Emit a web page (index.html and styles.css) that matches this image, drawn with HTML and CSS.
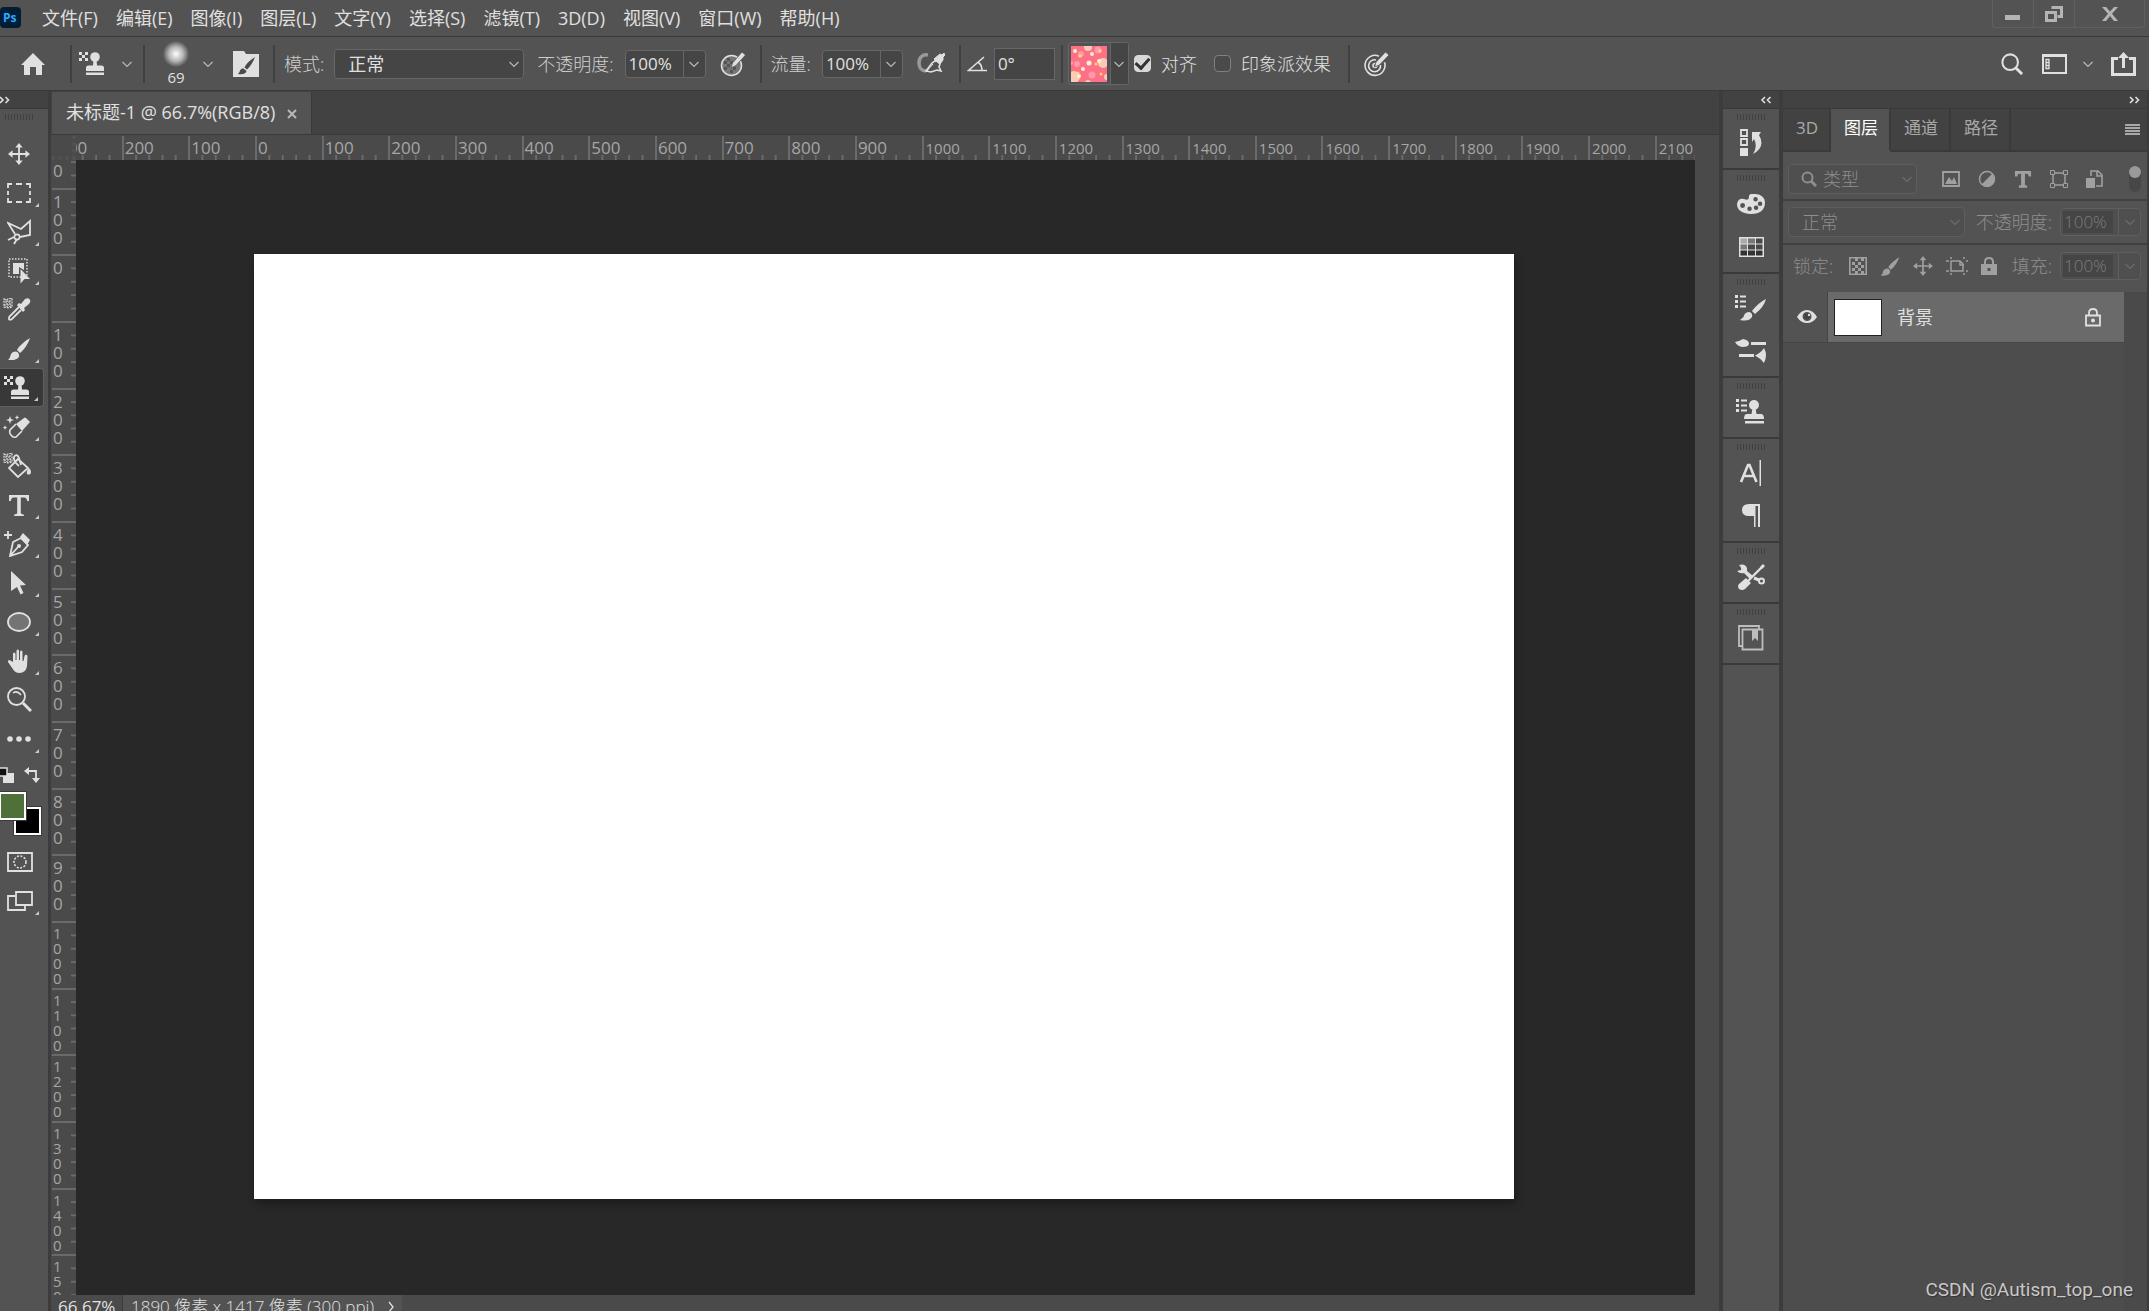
FILE: index.html
```html
<!DOCTYPE html>
<html lang="zh-CN">
<head>
  <meta charset="UTF-8" />
  <title>未标题-1 @ 66.7%(RGB/8)</title>
  <link rel="stylesheet" href="styles.css">
</head>
<body>

  <!-- Icons used more than once -->
  <svg class="sprite" aria-hidden="true">
    <symbol id="chevron" viewBox="0 0 12 8"><path d="M1.500 2l4.500 4.500L10.500 2" fill="none" stroke="currentColor" stroke-width="1.200"/></symbol>
    <symbol id="stamp" viewBox="0 0 28 24">
      <path d="M1 0h3v3H1zM7 0h3v3H7zM4 3h3v3H4zM1 6h3v3H1zM7 6h3v3H7z"/>
      <circle cx="17" cy="5" r="4.8"/><path d="M15.500 8h3l.600 6h-4.200z"/>
      <path d="M8 19v-3q0-2.500 2.500-2.500h13Q26 13.500 26 16v3zM8 20.500h18V23H8z"/>
    </symbol>
    <symbol id="brush" viewBox="0 0 24 24"><path d="M23 1C18 4 12 9 10 13l3 3C17 13 21 7 23 1zM9 14.500c-3 0-5 1.500-5.500 4C3 20.500 2 22 1 23c5 .500 10-.500 11-3.500.500-2-.500-4.500-3-5z"/></symbol>
    <symbol id="move" viewBox="0 0 24 24"><path d="M12 0l4 5h-3v6h6V8l5 4-5 4v-3h-6v6h3l-4 5-4-5h3v-6H5v3l-5-4 5-4v3h6V5H8z"/></symbol>
    <symbol id="search" viewBox="0 0 24 24"><circle cx="10" cy="10" r="8.500" fill="none" stroke="currentColor" stroke-width="2.200"/><path d="M16 16l7 7" stroke="currentColor" stroke-width="3.200"/></symbol>
    <symbol id="type" viewBox="0 0 24 24"><path d="M2 2h20v6h-1.800q-.400-3.600-3-3.600h-3.400V20q0 1.400 3 1.400V23H7.200v-1.600q3 0 3-1.400V4.400H6.800q-2.600 0-3 3.600H2z"/></symbol>
    <symbol id="list" viewBox="0 0 12 14"><path d="M0 0h3v3H0zM0 5h3v3H0zM0 10h3v3H0zM5 .500h6v2H5zM5 5.500h6v2H5zM5 10.500h6v2H5z"/></symbol>
  </svg>

  <!-- Menu bar -->
  <header class="menubar">
    <svg class="logo" viewBox="0 0 21 21"><rect width="21" height="21" rx="4" fill="#001e36"/><text x="3" y="15" class="logo-text">Ps</text></svg>
    <nav class="menus">
      <a href="#">文件(F)</a>
      <a href="#">编辑(E)</a>
      <a href="#">图像(I)</a>
      <a href="#">图层(L)</a>
      <a href="#">文字(Y)</a>
      <a href="#">选择(S)</a>
      <a href="#">滤镜(T)</a>
      <a href="#">3D(D)</a>
      <a href="#">视图(V)</a>
      <a href="#">窗口(W)</a>
      <a href="#">帮助(H)</a>
    </nav>
    <div class="window-buttons">
      <button aria-label="最小化"><svg width="16" height="16"><path d="M0 9h15v5H0z"/></svg></button>
      <button aria-label="还原"><svg width="18" height="16"><path d="M6.500 1.500h10v9h-4M1.500 6.500h9v8h-9z" fill="none" stroke="currentColor" stroke-width="3"/></svg></button>
      <button class="wide" aria-label="关闭"><svg width="16" height="14"><path d="M0 0h4l4 4.500L12 0h4l-6 6.700L16 14h-4L8 9l-4 5H0l6-7.300z"/></svg></button>
    </div>
  </header>

  <!-- Tool options -->
  <section class="options">
    <button class="home" aria-label="主页"><svg width="24" height="22" viewBox="0 0 24 22"><path d="M12 0l12 12h-3v10h-6v-8H9v8H3V12H0z"/></svg></button>
    <i class="sep"></i>
    <button class="preset" aria-label="图案图章工具"><svg width="28" height="24"><use href="#stamp"/></svg><svg class="chev" width="12" height="8"><use href="#chevron"/></svg></button>
    <i class="sep"></i>
    <button class="brush-picker" aria-label="画笔预设">
      <span class="brush-size"><i class="soft-brush"></i>69</span>
      <svg class="chev" width="12" height="8"><use href="#chevron"/></svg>
    </button>
    <button class="folder" aria-label="画笔设置"><svg width="26" height="26" viewBox="0 0 26 26"><path d="M0 0h11l2 3h13v23H0z"/><path d="M22 6C17 9 13 13 11.500 16.500l2.500 2C17.500 15.500 20 11 22 6zM10.500 17.500c-3 0-3.500 2-4 3.500L5 23c4 .600 8 0 8.500-3z" fill="#4a4a4a"/></svg></button>
    <i class="sep"></i>
    <label for="mode">模式:</label>
    <span class="select-box mode-box">
      <select id="mode"><option>正常</option></select>
      <svg class="chev" width="12" height="8"><use href="#chevron"/></svg>
    </span>
    <label for="opacity">不透明度:</label>
    <span class="combo">
      <input id="opacity" type="text" value="100%">
      <button aria-label="不透明度滑块"><svg class="chev" width="12" height="8"><use href="#chevron"/></svg></button>
    </span>
    <button class="pressure" aria-label="不透明度压力"><svg width="26" height="26" viewBox="0 0 26 26"><circle cx="11.500" cy="14.500" r="10" fill="#777" stroke="currentColor" stroke-width="1.500"/><path d="M4 10h3v3H4zM10 10h3v3h-3zM7 13h3v3H7zM13 16h3v3h-3zM4 16h3v3H4zM10 19h3v3h-3zM7 7h3v3H7z" fill="#555"/><path d="M11 17l1.500-5L22 1l3.500 3L16 14.500z" stroke="#535353" stroke-width=".8"/></svg></button>
    <i class="sep"></i>
    <label for="flow">流量:</label>
    <span class="combo">
      <input id="flow" type="text" value="100%">
      <button aria-label="流量滑块"><svg class="chev" width="12" height="8"><use href="#chevron"/></svg></button>
    </span>
    <button class="pressure" aria-label="喷枪"><svg width="28" height="22" viewBox="0 0 28 22"><path d="M11 2C5 1 2 5 2 10s3 8 7 8" fill="none" stroke="#999" stroke-width="3.500"/><path d="M9 18l6-8 4-3 4 4-1 3 2 4-4-1-6 2z" fill="none" stroke="currentColor" stroke-width="1.600"/><path d="M17 6l6-5 2 1 2-2 1 2-2 2 0 3-3 4zM9 19l7-8" stroke="currentColor"/></svg></button>
    <i class="sep"></i>
    <label class="angle-label" for="angle" aria-label="角度"><svg width="20" height="16" viewBox="0 0 20 16"><path d="M17 1L1.500 14.500H20M11 6q4 3 4 8" fill="none" stroke="currentColor" stroke-width="1.600"/></svg></label>
    <input id="angle" class="angle" type="text" value="0°">
    <i class="sep"></i>
    <button class="pattern" aria-label="图案拾色器">
      <svg width="36" height="36" viewBox="0 0 36 36">
        <rect width="36" height="36" fill="#ff6f87"/>
        <g fill="#f9cdb5"><circle cx="17" cy="1" r="4"/><circle cx="32" cy="17" r="5"/><circle cx="3" cy="31" r="6"/><circle cx="17" cy="37" r="3"/><circle cx="36" cy="31" r="3"/></g>
        <g fill="#ff9aaa"><circle cx="10" cy="8" r="3"/><circle cx="27" cy="4" r="3.500"/><circle cx="6" cy="18" r="3"/><circle cx="21" cy="29" r="3.500"/><circle cx="0" cy="17" r="2"/></g>
        <g fill="#fff3cf"><circle cx="4" cy="5" r="2"/><circle cx="21" cy="8" r="2"/><circle cx="18" cy="17" r="2.500"/><circle cx="12" cy="23" r="2"/><circle cx="28" cy="15" r="2"/><circle cx="8" cy="30" r="2"/></g>
        <g fill="#ffdc6b"><circle cx="9" cy="10" r="1.800"/><circle cx="29" cy="5" r="1.500"/><circle cx="25" cy="18" r="1.500"/><circle cx="7" cy="27" r="1.500"/><circle cx="30" cy="28" r="1.500"/></g>
      </svg>
      <span class="pattern-arrow"><svg class="chev" width="12" height="8"><use href="#chevron"/></svg></span>
    </button>
    <input id="aligned" type="checkbox" checked>
    <label for="aligned" class="check-label">对齐</label>
    <input id="impression" type="checkbox">
    <label for="impression" class="check-label">印象派效果</label>
    <i class="sep"></i>
    <button class="pressure" aria-label="大小压力"><svg width="26" height="26" viewBox="0 0 26 26"><g fill="none" stroke="currentColor" stroke-width="1.600"><path d="M15 5.200a10 10 0 1 0 5.500 6"/><path d="M12 9a6 6 0 1 0 4.500 5"/><circle cx="11" cy="14.500" r="2"/></g><path d="M10.500 16l1.500-5L21.500 1l3.500 3-9.500 10z" stroke="#535353" stroke-width=".8"/></svg></button>
    <div class="options-right">
      <button class="find" aria-label="搜索"><svg width="22" height="22"><use href="#search"/></svg></button>
      <button class="workspace" aria-label="工作区">
        <svg width="25" height="20" viewBox="0 0 25 20"><path d="M1 2h23v17H1z" fill="none" stroke="currentColor" stroke-width="2"/><path d="M0 0h25v3H0z"/><path d="M4 5.500h3v9H4zM4 8.500h3M4 11.500h3" fill="none" stroke="currentColor" stroke-width="1.300"/></svg>
        <svg class="chev" width="12" height="8"><use href="#chevron"/></svg>
      </button>
      <button aria-label="共享"><svg width="25" height="24" viewBox="0 0 25 24"><path d="M7 6.500H1.500v16h22v-16H18" fill="none" stroke="currentColor" stroke-width="3"/><path d="M11 16V6H7l5.500-6L18 6h-4v10z"/></svg></button>
    </div>
  </section>

  <main class="workarea">

    <!-- Toolbox -->
    <aside class="toolbox">
      <div class="dock-head"><svg width="10" height="8" viewBox="0 0 10 8"><path d="M0 1l3 3-3 3M5.500 1l3 3-3 3" fill="none" stroke="currentColor" stroke-width="1.600"/></svg></div>
      <div class="grip-row"><i class="grip"></i></div>
      <button class="tool" aria-label="移动"><svg width="24" height="22"><use href="#move"/></svg></button>
      <button class="tool more" aria-label="矩形选框"><svg width="24" height="20"><path d="M1 5V1h4M9 1h6M19 1h4v4M23 8v4M23 15v4h-4M15 19H9M5 19H1v-4M1 12V8" fill="none" stroke="currentColor" stroke-width="1.800"/></svg></button>
      <button class="tool more" aria-label="多边形套索"><svg width="24" height="26" viewBox="0 0 24 26"><path d="M8 15L1 4l13 6 9-8v14L13 18M7 25l3-5M1 21l6-3" fill="none" stroke="currentColor" stroke-width="1.800"/><circle cx="10" cy="18" r="2.600" fill="none" stroke="currentColor" stroke-width="1.600"/></svg></button>
      <button class="tool more" aria-label="对象选择"><svg width="24" height="26" viewBox="0 0 24 26"><rect x="2" y="1" width="18" height="18" fill="none" stroke="currentColor" stroke-width="1.500" stroke-dasharray="1.500 1.500"/><path d="M6 5h11v7l-5-3v7H6z"/><path d="M13.500 11l9.500 10h-5.500l-4 4.500z"/></svg></button>
      <button class="tool" aria-label="吸管"><svg class="left" width="28" height="24" viewBox="0 0 28 24"><path d="M1 1l2 1 2-1 4-1v9l-3 1-5-1zM2 4h6M1 7h7M4 2v7M7 2v7" fill="none" stroke="currentColor" stroke-width="1.200" stroke-dasharray="2 1"/><path d="M16 9L6.500 18.500q-2 4 2 3L18 12" fill="none" stroke="currentColor" stroke-width="1.800"/><path d="M14 7l2-2 2 1 4-5q4-2 5 1 1 2-1 4l-5 4 1 2-2 2z"/></svg></button>
      <button class="tool more" aria-label="画笔"><svg width="24" height="24"><use href="#brush"/></svg></button>
      <button class="tool more active" aria-label="图案图章"><svg class="left" width="28" height="24"><use href="#stamp"/></svg></button>
      <button class="tool more" aria-label="橡皮擦"><svg class="left" width="28" height="24" viewBox="0 0 28 24"><path d="M7 1l1 3 3 1-3 1-1 3-1-3-3-1 3-1zM14 0l.700 1.700 1.700.700-1.700.700L14 5l-.700-1.900-1.700-.700 1.700-.700zM2 10l.700 1.900 1.700.700-1.700.700L2 15l-.700-1.700-1.700-.700 1.700-.700zM13 9l8-6q1-1 2 0l4 4-8 9z"/><path d="M13 9l-6 6q-1 3 1 5 2 3 5 2l6-6" fill="none" stroke="currentColor" stroke-width="1.600"/></svg></button>
      <button class="tool" aria-label="油漆桶"><svg class="left" width="30" height="26" viewBox="0 0 30 26"><path d="M1 1l2 1 2-1 4-1v9l-3 1-5-1zM2 4h6M1 7h7M4 2v7M7 2v7" fill="none" stroke="currentColor" stroke-width="1.200" stroke-dasharray="2 1"/><path d="M15 6L6 15l9 9 10-9zM16 13Q10 8 11 4q3-4 5 1l2 7" fill="none" stroke="currentColor" stroke-width="1.800"/><path d="M26 15q3 3 1.500 6-2 1-3.500 0-1-3 2-6z"/></svg></button>
      <button class="tool more" aria-label="文字"><svg width="24" height="24"><use href="#type"/></svg></button>
      <button class="tool more" aria-label="钢笔"><svg class="left" width="28" height="26" viewBox="0 0 28 26"><path d="M5 0v8M1 4h8" stroke="currentColor" stroke-width="1.800"/><path d="M7 25l3-14 8-4 7 7-6 7zM7 25l8-9" fill="none" stroke="currentColor" stroke-width="1.800"/><circle cx="16" cy="15" r="2"/><path d="M17 6l3-4 7 7-3 5z"/></svg></button>
      <button class="tool more" aria-label="路径选择"><svg width="24" height="24" viewBox="-3 0 24 24"><path d="M1 0l15 14-6 .500 3.500 7.500-3 1.500L7 16l-6 4z"/></svg></button>
      <button class="tool more" aria-label="椭圆"><svg width="24" height="20"><ellipse cx="12" cy="10" rx="11" ry="9" fill="#747474" stroke="currentColor" stroke-width="1.800"/></svg></button>
      <button class="tool more" aria-label="抓手"><svg width="24" height="24" viewBox="-1 0 24 24"><path d="M5 13V5q0-1.500 1.200-1.500T7.500 5v6h1V2q0-1.500 1.300-1.500T11 2v9h1V3q0-1.500 1.300-1.500T14.500 3v9h1l1-5q.500-1.500 1.700-1.200T19.500 7L19 17q-1 7-7.500 7-4 0-6-3L0 13q-.500-2 1.500-2z"/></svg></button>
      <button class="tool" aria-label="缩放"><svg width="25" height="25" viewBox="0 0 25 25"><circle cx="9.500" cy="9.500" r="8.500" fill="none" stroke="currentColor" stroke-width="1.800"/><path d="M6 6q4-3 8 2" fill="none" stroke="currentColor" stroke-width="1.500"/><path d="M16 16l8 8" stroke="currentColor" stroke-width="3"/></svg></button>
      <button class="tool more" aria-label="更多工具"><svg width="24" height="8"><circle cx="3" cy="4" r="2.800"/><circle cx="12" cy="4" r="2.800"/><circle cx="21" cy="4" r="2.800"/></svg></button>
      <div class="color-reset">
        <svg width="14" height="16"><path d="M3 6h11v10H3z"/><path d="M-1 1h8v8h-8z" fill="#111" stroke="currentColor" stroke-width="1.500"/></svg>
        <svg width="16" height="16" viewBox="0 0 16 16"><path d="M3 4h9v8" fill="none" stroke="currentColor" stroke-width="1.800"/><path d="M0 4l5-4v8zM8 11h8l-4 5z"/></svg>
      </div>
      <div class="colors">
        <button class="swatch background" aria-label="背景色"></button>
        <button class="swatch foreground" aria-label="前景色"></button>
      </div>
      <button class="tool" aria-label="快速蒙版"><svg width="26" height="20"><path d="M1 1h24v18H1z" fill="none" stroke="currentColor" stroke-width="1.800"/><circle cx="13" cy="10" r="6" fill="none" stroke="currentColor" stroke-width="1.600" stroke-dasharray="2 1.500"/></svg></button>
      <button class="tool more" aria-label="屏幕模式"><svg width="26" height="20"><path d="M8 5H1v14h17v-4M9 1h16v13H9z" fill="none" stroke="currentColor" stroke-width="1.800"/></svg></button>
    </aside>

    <!-- Document window -->
    <section class="document">
      <div class="doc-tabs">
        <div class="doc-tab">未标题-1 @ 66.7%(RGB/8)<button aria-label="关闭文档"><svg width="10" height="10"><path d="M1 1l8 8M9 1L1 9" stroke="currentColor" stroke-width="2"/></svg></button></div>
      </div>
      <div class="doc-view">
        <div class="ruler-corner"></div>
        <div class="ruler ruler-x" id="rulerX"></div>
        <div class="scroll-y"></div>
        <div class="ruler ruler-y" id="rulerY"></div>
        <div class="stage"><div class="paper"></div></div>
      </div>
      <footer class="status">
        <span class="zoom">66.67%</span>
        <span class="doc-info">1890 像素 x 1417 像素 (300 ppi)<svg width="6" height="12"><path d="M1 1l4 5-4 5" fill="none" stroke="currentColor" stroke-width="1.300"/></svg></span>
      </footer>
    </section>

    <!-- Collapsed panels -->
    <aside class="icon-dock">
      <div class="dock-head"><svg width="12" height="8" viewBox="0 0 12 8"><path d="M5 1L2 4l3 3M10.500 1l-3 3 3 3" fill="none" stroke="currentColor" stroke-width="1.600"/></svg></div>
      <div class="dock-group"><i class="grip"></i>
        <button aria-label="历史记录"><svg width="24" height="28" viewBox="0 0 24 28"><path d="M2 1h6v6H2zM2 10h6v6H2z" fill="none" stroke="currentColor" stroke-width="1.800"/><path d="M1 19h8v8H1zM13 3l9 0-2 3q7 12-6 19 5-8 1-15l-2 3z"/></svg></button>
      </div>
      <div class="dock-group"><i class="grip"></i>
        <button aria-label="颜色"><svg width="28" height="20" viewBox="0 0 28 20"><path fill-rule="evenodd" d="M12 4q-1-3 2-4 13-1 14 8 0 12-14 12Q0 19 0 10q1-6 7-5 4 2 5-1zM5.500 9a2.500 2.500 0 1 0 .1 5 2.500 2.500 0 0 0-.1-5zm7 3.500a2.200 2.200 0 1 0 .1 4.500 2.200 2.200 0 0 0-.1-4.500zm6.500-1a2.200 2.200 0 1 0 .1 4.500 2.200 2.200 0 0 0-.1-4.500zm4-4a2.200 2.200 0 1 0 .1 4.500 2.200 2.200 0 0 0-.1-4.500zM18.500 3a2.200 2.200 0 1 0 .1 4.500 2.200 2.200 0 0 0-.1-4.500z"/></svg></button>
        <button aria-label="色板"><svg width="25" height="20" viewBox="0 0 25 20"><path d="M0 0h25v20H0z"/><path d="M1.500 1.500h6.500v5H1.500z" fill="#aaa"/><path d="M9 1.500h7v5H9zM1.500 7.500H8v5H1.500z" fill="#777"/><path d="M17 1.500h6.500v5H17zM9 7.500h7v5H9zM17 7.500h6.500v5H17z" fill="#484848"/><path d="M1.500 13.500H8v5H1.500zM9 13.500h7v5H9zM17 13.500h6.500v5H17z" fill="#333"/></svg></button>
      </div>
      <div class="dock-group"><i class="grip"></i>
        <button aria-label="画笔设置"><svg width="32" height="26" viewBox="0 0 32 26"><use href="#list" width="12" height="14"/><path d="M31 4q-8 4-14 12l3 3Q29 12 31 4zM14.500 17q-5 0-6 5L5 25q9 2 12-3 1-4-2.500-5z"/></svg></button>
        <button aria-label="画笔"><svg width="32" height="24" viewBox="0 0 32 24"><path d="M0 3q5-1 8-3 6 1 6 4.500T7 8Q2 7 0 3zM16 3h15v3H16zM4 15h15v3H4zM20 16.500Q26 14 29 9q4 7 0 15-4-5-9-7.500z"/></svg></button>
      </div>
      <div class="dock-group"><i class="grip"></i>
        <button aria-label="仿制源"><svg width="30" height="26" viewBox="0 0 30 26"><use href="#list" width="12" height="14"/><circle cx="18" cy="6" r="5"/><path d="M16.500 9h3l1 6h-5zM8 20q0-5 3-5h14q3 0 3 5zM9 22h19v2.500H9z"/></svg></button>
      </div>
      <div class="dock-group"><i class="grip"></i>
        <button aria-label="字符"><svg width="24" height="26" viewBox="0 0 24 26"><path d="M2 22L9 5h1.500l7 17M5 16h10" fill="none" stroke="currentColor" stroke-width="2.600"/><path d="M20.500 0h1.500v26h-1.500z"/></svg></button>
        <button aria-label="段落"><svg width="18" height="23" viewBox="0 0 18 23"><path d="M18 0v23h-2V2h-2.500v21H12V12H7Q0 12 0 6t7-6z"/></svg></button>
      </div>
      <div class="dock-group"><i class="grip"></i>
        <button aria-label="工具预设"><svg width="28" height="26" viewBox="0 0 28 26"><path d="M26 2L11 17" stroke="currentColor" stroke-width="2.400"/><path d="M23 3l3-3 2 2-3 3zM9 14l5 5-6 6q-3 2-6 0-2-3 0-5z"/><path d="M2 1q6-2 8 3v3l6 5-3 3-6-6q-4 1-7-2l4-1q1-2-2-5z"/><path d="M17 14l5 2" stroke="currentColor" stroke-width="3"/><circle cx="24.500" cy="17" r="2.500" fill="none" stroke="currentColor" stroke-width="2"/></svg></button>
      </div>
      <div class="dock-group"><i class="grip"></i>
        <button class="dim" aria-label="库"><svg width="26" height="26" viewBox="0 0 26 26"><path d="M4 21H1V1h20v3M4.500 4.500h20v20h-20z" fill="none" stroke="currentColor" stroke-width="1.800"/><path d="M14 5h6v11l-3-3-3 3z"/></svg></button>
      </div>
      <div class="dock-rest"></div>
    </aside>

    <!-- Layers panel -->
    <aside class="panels">
      <div class="dock-head right"><svg width="12" height="8" viewBox="0 0 12 8"><path d="M1 1l3 3-3 3M6.500 1l3 3-3 3" fill="none" stroke="currentColor" stroke-width="1.600"/></svg></div>
      <div class="panel-tabs">
        <button>3D</button>
        <button class="current">图层</button>
        <button>通道</button>
        <button>路径</button>
        <button class="panel-menu" aria-label="面板菜单"><svg width="15" height="12"><path d="M0 0h15v2H0zM0 3h15v2H0zM0 6h15v2H0zM0 9h15v2H0z"/></svg></button>
      </div>
      <div class="panel-row filter-row">
        <span class="select-box filter-box">
          <svg width="16" height="16" viewBox="0 0 16 16"><circle cx="6.500" cy="6.500" r="5" fill="none" stroke="currentColor" stroke-width="2"/><path d="M10 10l5 5" stroke="currentColor" stroke-width="3"/></svg>
          <select aria-label="图层过滤" disabled><option>类型</option></select>
          <svg class="chev" width="12" height="8"><use href="#chevron"/></svg>
        </span>
        <div class="filter-icons">
          <button disabled aria-label="像素图层"><svg width="18" height="16"><path d="M1 1h16v14H1z" fill="none" stroke="currentColor" stroke-width="1.800"/><path d="M3 13l4-7 3 4 2-4 3 7z"/></svg></button>
          <button disabled aria-label="调整图层"><svg width="18" height="18"><circle cx="9" cy="9" r="7.500" fill="none" stroke="currentColor" stroke-width="1.500"/><path d="M14.500 3.500L3.500 14.500A7.600 7.600 0 0 0 14.500 3.500z"/></svg></button>
          <button disabled aria-label="文字图层"><svg width="18" height="18" viewBox="0 0 24 24"><use href="#type" stroke="currentColor" stroke-width="1.500"/></svg></button>
          <button disabled aria-label="形状图层"><svg width="18" height="18"><path d="M3 3h12v12H3z" fill="none" stroke="currentColor" stroke-width="1.500"/><path d="M.500.500h4v4h-4zM13.500.500h4v4h-4zM.500 13.500h4v4h-4zM13.500 13.500h4v4h-4z" fill="#535353" stroke="currentColor"/></svg></button>
          <button disabled aria-label="智能对象"><svg width="18" height="18"><path d="M5 6V1h7l4 4v11h-6M11 1v5h5" fill="none" stroke="currentColor" stroke-width="1.600"/><path d="M0 8h9v10H0z"/></svg></button>
        </div>
        <button class="toggle" disabled aria-label="图层过滤开关"><i></i></button>
      </div>
      <div class="panel-row blend-row">
        <span class="select-box blend-box">
          <select aria-label="混合模式" disabled><option>正常</option></select>
          <svg class="chev" width="12" height="8"><use href="#chevron"/></svg>
        </span>
        <label for="layerOpacity">不透明度:</label>
        <span class="combo">
          <input id="layerOpacity" type="text" value="100%" disabled>
          <button disabled aria-label="图层不透明度"><svg class="chev" width="12" height="8"><use href="#chevron"/></svg></button>
        </span>
      </div>
      <div class="panel-row lock-row">
        <span class="lock-label">锁定:</span>
        <div class="lock-icons">
          <button disabled aria-label="锁定透明像素"><svg width="18" height="18"><path d="M.800.800h16.400v16.400H.800z" fill="none" stroke="currentColor" stroke-width="1.600"/><path d="M6 1h3v3H6zM12 1h3v3h-3zM3 5h3v3H3zM9 5h3v3H9zM6 8h3v3H6zM12 8h3v3h-3zM3 11h3v3H3zM9 11h3v3H9zM6 14h3v3H6zM12 14h3v3h-3z"/></svg></button>
          <button disabled aria-label="锁定图像像素"><svg width="20" height="21" viewBox="0 0 24 24"><use href="#brush"/></svg></button>
          <button disabled aria-label="锁定位置"><svg width="20" height="20"><use href="#move"/></svg></button>
          <button disabled aria-label="防止嵌套"><svg width="22" height="18"><path d="M0 4h3M5 4h9l3 3v7H5zM14 4v4h4M5 0v2M18 0v2M20 4h2M0 14h3M5 16v2M18 16v2M20 14h2" fill="none" stroke="currentColor" stroke-width="1.500"/></svg></button>
          <button disabled aria-label="锁定全部"><svg width="16" height="18"><path d="M4 8V5q0-4 4-4t4 4v3" fill="none" stroke="currentColor" stroke-width="2"/><path fill-rule="evenodd" d="M0 7h16v11H0zM6.500 11v3h3v-3z"/></svg></button>
        </div>
        <label for="fill">填充:</label>
        <span class="combo">
          <input id="fill" type="text" value="100%" disabled>
          <button disabled aria-label="填充"><svg class="chev" width="12" height="8"><use href="#chevron"/></svg></button>
        </span>
      </div>
      <div class="layers">
        <div class="layer-list">
          <div class="layer">
            <button class="eye" aria-label="可见性"><svg width="20" height="14" viewBox="0 0 20 14"><path fill-rule="evenodd" d="M0 7q4-7 10-7t10 7q-4 6-10 6T0 7zm10-5a4.500 4.500 0 1 0 .1 9 4.500 4.500 0 0 0-.1-9z"/><circle cx="10" cy="6.500" r="3" fill="#444"/><circle cx="12" cy="5" r="1.200"/></svg></button>
            <div class="layer-body">
              <i class="thumb"></i>
              <span class="layer-name">背景</span>
              <svg width="16" height="19" viewBox="0 0 16 19"><path d="M4 7V5q0-4 4-4t4 4v2M1 7.500h14v10H1z" fill="none" stroke="currentColor" stroke-width="1.800"/><circle cx="8" cy="12.500" r="2"/></svg>
            </div>
          </div>
        </div>
        <div class="layer-scroll"></div>
      </div>
    </aside>
  </main>

  <div class="watermark">CSDN @Autism_top_one</div>

  <script>
    // one cell per 100 document pixels, starting left of / above the origin
    function buildRuler(id, from, to) {
      const ruler = document.getElementById(id);
      for (let n = from; n <= to; n += 100) {
        const cell = document.createElement("span");
        const value = Math.abs(n);
        cell.textContent = value;
        cell.className = value >= 1000 ? "cell small" : "cell";
        ruler.appendChild(cell);
      }
    }

    buildRuler("rulerX", -300, 2100);
    buildRuler("rulerY", -200, 1500);
  </script>

</body>
</html>
```
FILE: styles.css
```css
* {
  box-sizing: border-box;
}
body {
  margin: 0;
  height: 100vh;
  display: flex;
  flex-direction: column;
  overflow: hidden;
  background-color: #535353;
  color: #e0e0e0;
  font-family: "Open Sans", "Noto Sans CJK SC", sans-serif;
  font-size: 18px;
  line-height: 24px;
}
button, input, select {
  font: inherit;
  color: inherit;
  margin: 0;
  padding: 0;
  border: 0;
  background: none;
}
button {
  display: flex;
  align-items: center;
  justify-content: center;
}
svg {
  display: block;
  flex: none;
  fill: currentColor;
}
a {
  color: inherit;
  text-decoration: none;
}
.sprite {
  display: none;
}
.chev {
  color: #b8b8b8;
}

/* menu bar */
.menubar {
  display: flex;
  align-items: center;
  height: 37px;
  padding-bottom: 1px;
  border-bottom: 1px solid #3a3a3a;
}
.logo {
  width: 21px;
  height: 21px;
}
.logo-text {
  font-size: 12px;
  font-weight: bold;
  fill: #31a8ff;
}
.menus {
  display: flex;
  gap: 18px;
  margin-left: 21px;
}
.window-buttons {
  display: flex;
  align-self: flex-start;
  margin: 0 4px 0 auto;
  height: 28px;
  border: 1px solid #606060;
  border-top: 0;
  border-radius: 0 0 4px 4px;
  color: #b4b4b4;
}
.window-buttons button {
  width: 41px;
  border-right: 1px solid #606060;
}
.window-buttons .wide {
  width: 69px;
  border-right: 0;
}

/* tool options */
.options {
  display: flex;
  align-items: center;
  height: 54px;
  padding: 0 13px 0 21px;
  border-bottom: 1px solid #3a3a3a;
  flex: none;
}
.options label {
  color: #cfcfcf;
  font-weight: 300;
  white-space: nowrap;
}
.sep {
  flex: none;
  width: 2px;
  height: 38px;
  background-color: #404040;
}
.home {
  margin-right: 25px;
}
.preset {
  gap: 15px;
  margin: 0 10px 0 6px;
}
.brush-picker {
  gap: 13px;
  margin: 0 19px 0 18px;
}
.brush-size {
  display: flex;
  flex-direction: column;
  align-items: center;
  font-size: 15px;
  line-height: 20px;
}
.soft-brush {
  width: 26px;
  height: 26px;
  border-radius: 50%;
  background: radial-gradient(circle, #fff 0%, #b4b4b4 40%, #535353 72%);
}
.folder {
  margin-right: 14px;
}
.sep + label {
  margin-left: 9px;
}
.select-box {
  display: flex;
  align-items: center;
  height: 30px;
  padding-right: 3px;
  border: 1px solid #666;
  border-radius: 4px;
  background-color: #454545;
}
.select-box select {
  flex: 1;
  min-width: 0;
  appearance: none;
  opacity: 1;
}
.mode-box {
  width: 190px;
  margin: 0 13px 0 10px;
  padding-left: 13px;
}
.combo {
  display: flex;
  width: 81px;
  height: 28px;
  margin-left: 11px;
  border: 1px solid #666;
  border-radius: 4px;
  background-color: #454545;
}
.combo input {
  flex: 1;
  min-width: 0;
  padding-left: 3px;
  font-size: 17px;
}
.combo button {
  width: 22px;
  border-left: 1px solid #666;
}
.pressure {
  margin: 0 14px;
}
.options .angle-label {
  margin: 0 7px 0 6px;
  color: #e0e0e0;
}
.angle {
  width: 61px;
  height: 32px;
  margin-right: 6px;
  padding-left: 3px;
  border: 1px solid #666;
  background-color: #454545;
  font-size: 17px;
}
.pattern {
  margin: 0 5px;
  height: 43px;
  padding-left: 2px;
  border: 1px solid #666;
  border-radius: 3px;
}
.pattern-arrow {
  display: flex;
  align-items: center;
  justify-content: center;
  width: 18px;
  height: 41px;
  margin-left: 3px;
  border-left: 1px solid #666;
  background-color: #454545;
}
input[type="checkbox"] {
  appearance: none;
  flex: none;
  display: flex;
  align-items: center;
  justify-content: center;
  width: 17px;
  height: 17px;
  border: 1px solid #808080;
  border-radius: 4px;
  background-color: #4a4a4a;
}
input[type="checkbox"]:checked {
  border-color: #d8d8d8;
  background-color: #d8d8d8;
}
input[type="checkbox"]:checked::before {
  content: "";
  width: 6px;
  height: 11px;
  margin-bottom: 3px;
  border: solid #333;
  border-width: 0 3px 3px 0;
  transform: rotate(42deg);
}
.options .check-label {
  margin: 0 17px 0 10px;
  color: #e0e0e0;
}
.options-right {
  display: flex;
  align-items: center;
  gap: 17px;
  margin-left: auto;
}
.find {
  margin-right: 2px;
}
.workspace {
  gap: 15px;
}

/* main area */
.workarea {
  display: flex;
  flex: 1;
  min-height: 0;
}
.dock-head {
  display: flex;
  align-items: center;
  height: 18px;
  flex: none;
  border-bottom: 1px solid #3a3a3a;
  background-color: #424242;
}
.dock-head.right {
  justify-content: flex-end;
  padding-right: 6px;
}
.grip {
  width: 28px;
  height: 6px;
  background: repeating-linear-gradient(to right, #404040 0 1px, transparent 1px 3px);
}

/* toolbox */
.toolbox {
  width: 51px;
  flex: none;
  border-right: 3px solid #3c3c3c;
}
.grip-row {
  display: flex;
  height: 25px;
  padding: 5px 0 0 5px;
}
.tool {
  position: relative;
  justify-content: flex-start;
  width: 44px;
  height: 39px;
  padding-left: 7px;
}
.tool .left {
  margin-left: -4px;
}
.tool.active {
  border: 1px solid #606060;
  border-left: 0;
  border-radius: 0 4px 4px 0;
  background-color: #383838;
}
.tool.more::after {
  content: "";
  position: absolute;
  right: 5px;
  bottom: 5px;
  border: 2px solid #c8c8c8;
  border-top-color: transparent;
  border-left-color: transparent;
}
.color-reset {
  display: flex;
  gap: 10px;
  height: 34px;
  align-items: center;
}
.colors {
  position: relative;
  height: 50px;
}
.swatch {
  position: absolute;
  width: 27px;
  height: 28px;
  border: 2px solid #fff;
  outline: 1px solid #3a3a3a;
}
.foreground {
  top: 0;
  left: -1px;
  background-color: #50703a;
}
.background {
  top: 15px;
  left: 14px;
  background-color: #000;
}

/* document */
.document {
  display: flex;
  flex-direction: column;
  flex: 1;
  min-width: 0;
}
.doc-tabs {
  display: flex;
  height: 44px;
  flex: none;
  padding: 1px 0 0 1px;
  border-bottom: 1px solid #3a3a3a;
  background-color: #424242;
}
.doc-tab {
  display: flex;
  align-items: center;
  gap: 12px;
  padding: 0 14px 3px 14px;
  border-right: 1px solid #3a3a3a;
  background-color: #535353;
}
.doc-tab button {
  color: #b8b8b8;
  padding-top: 4px;
}
.doc-view {
  display: grid;
  grid-template-columns: 25px 1fr 24px;
  grid-template-rows: 25px 1fr;
  flex: 1;
  min-height: 0;
  background-color: #4a4a4a;
}
.ruler-corner {
  border-right: 4px dotted #525252;
  border-bottom: 4px dotted #525252;
}
.ruler {
  display: flex;
  overflow: hidden;
  color: #a6a6a6;
  font-size: 17px;
}
.ruler-x {
  padding-top: 1px;
}
.ruler-y {
  grid-column: 1;
  flex-direction: column;
  padding-left: 1px;
}
.cell {
  /* 100 document pixels at 66.67% */
  flex: 0 0 calc(200px / 3);
  background-origin: border-box;
}
.ruler-x .cell {
  padding: 0 0 0 1px;
  border-left: 2px solid #6a6a6a;
  background-image: linear-gradient(to right, #6a6a6a 2px, transparent 2px);
  background-size: 20% 5px;
  background-position: left bottom;
  background-repeat: repeat-x;
}
.ruler-x .cell:first-child {
  margin-left: -21px;
}
.ruler-y .cell {
  padding: 3px 13px 0 1px;
  border-top: 2px solid #6a6a6a;
  background-image: linear-gradient(to bottom, #6a6a6a 2px, transparent 2px);
  background-size: 5px 20%;
  background-position: right top;
  background-repeat: repeat-y;
  line-height: 18px;
  word-break: break-all;
}
.ruler-y .cell:first-child {
  margin-top: -39px;
}
.cell.small {
  font-size: 15px;
}
.ruler-x .small {
  padding-left: 2px;
}
.ruler-y .small {
  line-height: 15px;
}
.scroll-y {
  grid-column: 3;
  grid-row: 1 / 3;
}
.stage {
  grid-column: 2;
  grid-row: 2;
  overflow: hidden;
  background-color: #282828;
}
.paper {
  width: 1260px;
  height: 945px;
  margin: 94px 178px;
  background-color: #fff;
  box-shadow: 2px 5px 8px rgba(0,0,0,0.3);
}
.status {
  display: flex;
  height: 16px;
  flex: none;
  overflow: hidden;
  background-color: #4a4a4a;
  font-size: 17px;
}
.zoom {
  width: 72px;
  padding-left: 7px;
  border-right: 1px solid #3a3a3a;
}
.doc-info {
  display: flex;
  align-items: center;
  height: 24px;
  gap: 14px;
  padding: 0 8px;
  background-color: #535353;
  font-weight: 300;
}

/* collapsed panels */
.icon-dock {
  display: flex;
  flex-direction: column;
  width: 64px;
  flex: none;
  border-left: 4px solid #3c3c3c;
  border-right: 4px solid #3c3c3c;
}
.icon-dock .dock-head {
  padding-left: 37px;
}
.dock-group {
  display: flex;
  flex-direction: column;
  align-items: center;
  padding: 5px 0 4px;
  border-bottom: 2px solid #3a3a3a;
}
.dock-group button {
  width: 100%;
  height: 43px;
}
.dock-group .grip {
  margin-bottom: 1px;
}
.dock-group .dim {
  color: #bdbdbd;
}

/* layers panel */
.panels {
  display: flex;
  flex-direction: column;
  width: 366px;
  flex: none;
  border-right: 2px solid #3c3c3c;
}
.panel-tabs {
  display: flex;
  height: 43px;
  background-color: #424242;
}
.panel-tabs button {
  padding: 0 11px 4px 13px;
  border-right: 2px solid #3a3a3a;
  border-bottom: 2px solid #3a3a3a;
  color: #a8a8a8;
  font-size: 17px;
}
.panel-tabs .current {
  border-bottom-color: #535353;
  background-color: #535353;
  color: #fff;
}
.panel-tabs .panel-menu {
  flex: 1;
  justify-content: flex-end;
  padding: 0 7px 0 0;
  border-right: 0;
}
.panel-row {
  display: flex;
  align-items: center;
  padding: 0 6px 0 5px;
  border-bottom: 2px solid #404040;
  color: #8e8e8e;
  font-weight: 300;
}
.panel-row label, .lock-label {
  white-space: nowrap;
  margin-left: auto;
}
.panel-row .select-box, .panel-row .combo {
  border-color: #5e5e5e;
  background-color: #4f4f4f;
}
.panel-row .combo {
  margin-left: 8px;
  flex: none;
}
.panel-row .combo input {
  margin: 2px 5px 2px 2px;
  padding-left: 1px;
  background-color: #454545;
  color: #7c7c7c;
}
.panel-row .combo button {
  border-color: #5e5e5e;
}
.panel-row .chev {
  color: #6c6c6c;
}
.filter-row {
  height: 49px;
  padding-top: 7px;
}
.filter-box {
  width: 129px;
  padding-left: 12px;
  gap: 6px;
}
.filter-icons {
  display: flex;
  gap: 18px;
  margin-left: 25px;
  color: #a0a0a0;
}
.toggle {
  align-items: flex-start;
  width: 12px;
  height: 26px;
  margin-left: auto;
  border-radius: 6px;
  background-color: #474747;
}
.toggle i {
  width: 12px;
  height: 12px;
  border-radius: 50%;
  background-color: #999;
}
.blend-row {
  height: 44px;
}
.blend-box {
  width: 177px;
  padding-left: 13px;
}
.lock-row {
  height: 47px;
  padding-bottom: 5px;
  border-bottom: 0;
}
.lock-label {
  margin-left: 5px;
}
.lock-icons {
  display: flex;
  gap: 13px;
  margin-left: 16px;
  color: #a0a0a0;
}
.layers {
  display: flex;
  flex: 1;
}
.layer-list {
  flex: 1;
  background-color: #4d4d4d;
}
.layer {
  display: flex;
  height: 51px;
  border-bottom: 1px solid #444;
}
.eye {
  width: 45px;
  padding-left: 3px;
  border-right: 1px solid #444;
  background-color: #535353;
}
.layer-body {
  display: flex;
  align-items: center;
  flex: 1;
  padding: 0 23px 0 6px;
  background-color: #6a6a6a;
}
.thumb {
  width: 48px;
  height: 37px;
  border: 1px solid #222;
  background-color: #fff;
}
.layer-name {
  flex: 1;
  margin-left: 15px;
}
.layer-scroll {
  width: 23px;
  background-color: #4a4a4a;
}

.watermark {
  position: absolute;
  right: 16px;
  bottom: 9px;
  color: #c8c8c8;
  font-family: Roboto, sans-serif;
  font-size: 19px;
  text-shadow: 1px 1px 1px #333;
}
```
